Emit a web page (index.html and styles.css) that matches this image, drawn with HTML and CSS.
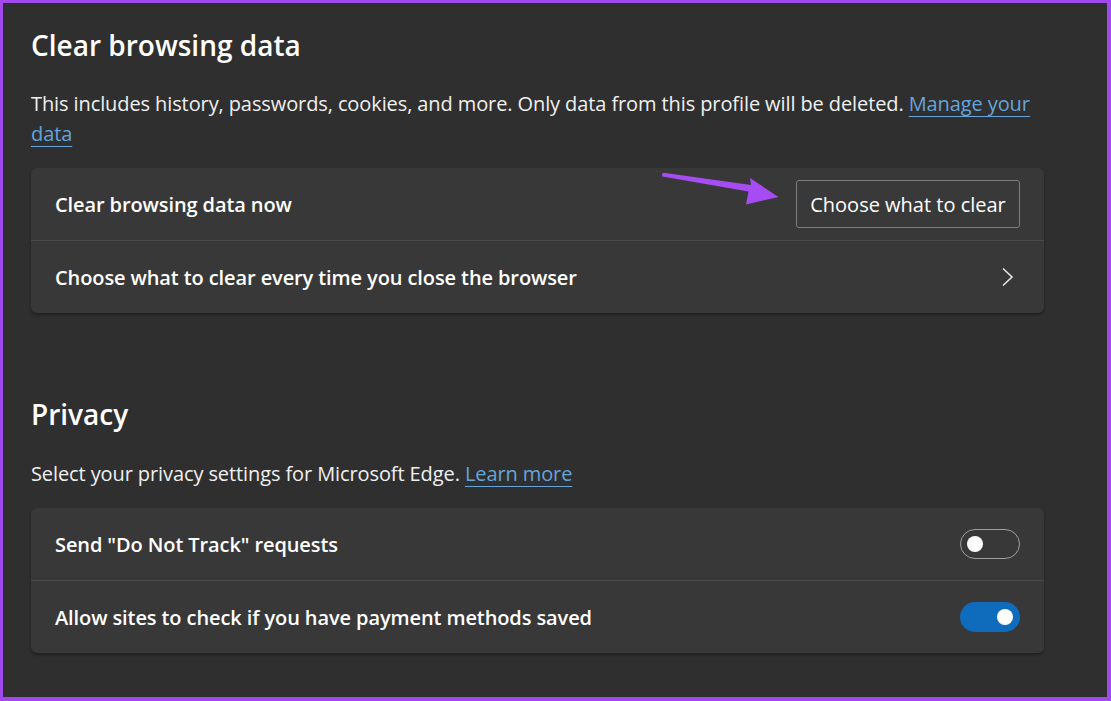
FILE: index.html
```html
<!DOCTYPE html>
<html lang="en">
<head>
<meta charset="utf-8">
<title>Clear browsing data</title>
<link rel="stylesheet" href="styles.css">
</head>
<body>
<div class="frame">
  <section class="section first">
    <h1 class="title">Clear browsing data</h1>
    <p class="desc">This includes history, passwords, cookies, and more. Only data from this profile will be deleted. <a class="link" href="#">Manage your data</a></p>
    <div class="card">
      <div class="row">
        <span class="label">Clear browsing data now</span>
        <button class="btn">Choose what to clear</button>
        <svg class="arrow" width="124" height="36" viewBox="0 0 124 36">
          <path d="M2.5 0.8 L90 13 L89 6 L117.5 25 L85 32.5 L87.5 19.5 L1.5 4.5 Q0 2.5 2.5 0.8 Z" fill="#a54df2"/>
        </svg>
      </div>
      <div class="row">
        <span class="label">Choose what to clear every time you close the browser</span>
        <svg class="chev" width="14" height="20" viewBox="0 0 14 20"><path d="M2 1.5 L11 10 L2 18.5" fill="none" stroke="#e6e6e6" stroke-width="1.6"/></svg>
      </div>
    </div>
  </section>
  <section class="section second">
    <h1 class="title">Privacy</h1>
    <p class="desc">Select your privacy settings for Microsoft Edge. <a class="link" href="#">Learn more</a></p>
    <div class="card">
      <div class="row">
        <span class="label">Send "Do Not Track" requests</span>
        <span class="toggle off"><span class="knob"></span></span>
      </div>
      <div class="row">
        <span class="label">Allow sites to check if you have payment methods saved</span>
        <span class="toggle on"><span class="knob"></span></span>
      </div>
    </div>
  </section>
</div>
</body>
</html>
```
FILE: styles.css
```css
* { box-sizing: border-box; }
html, body { margin: 0; padding: 0; }
body {
  background: #2f2f2f;
  font-family: "Open Sans", "Noto Sans", sans-serif;
  color: #ffffff;
}
.frame {
  width: 1111px;
  height: 701px;
  border-style: solid;
  border-color: #a249ee;
  border-width: 3px 4px 4px 3px;
  background: #2f2f2f;
  padding: 0 63px 0 28px;
  overflow: hidden;
}
.section.first { padding-top: 22px; }
.section.second { padding-top: 81px; }
.title {
  margin: 0;
  font-size: 28px;
  line-height: 40px;
  font-weight: 600;
  color: #ffffff;
}
.desc {
  margin: 0;
  font-size: 20px;
  line-height: 30px;
  color: #f0f0f0;
  letter-spacing: -0.1px;
}
.first .desc { margin-top: 24px; }
.second .desc { margin-top: 25px; }
.link {
  color: #66a4da;
  text-decoration: underline;
  text-decoration-color: #66a4da;
  text-underline-offset: 5px;
  text-decoration-thickness: 1px;
}
.card {
  margin-top: 19px;
  width: 1013px;
  background: #383838;
  border-radius: 6px;
  box-shadow: 0 2px 3px rgba(0, 0, 0, 0.35);
}
.second .card { margin-top: 19px; }
.row {
  position: relative;
  height: 72px;
  display: flex;
  align-items: center;
  justify-content: space-between;
  padding: 0 24px;
}
.row + .row { border-top: 1px solid #4a4a4a; height: 73px; }
.label {
  font-size: 20px;
  font-weight: 600;
  color: #ffffff;
  letter-spacing: -0.1px;
}
.btn {
  width: 224px;
  height: 48px;
  background: #393939;
  border: 1px solid #7d7d7d;
  border-radius: 3px;
  color: #ffffff;
  font-family: inherit;
  font-size: 20px;
  padding: 0;
}
.arrow {
  position: absolute;
  left: 630px;
  top: 4px;
}
.chev { margin-right: 5px; }
.toggle {
  position: relative;
  width: 60px;
  height: 30px;
  border-radius: 15px;
  display: block;
}
.toggle.off { border: 1.5px solid #a0a0a0; }
.toggle.on { background: #0f6cbd; }
.knob {
  position: absolute;
  top: 50%;
  width: 16px;
  height: 16px;
  margin-top: -8px;
  border-radius: 50%;
  background: #ffffff;
}
.toggle.off .knob { left: 6px; }
.toggle.on .knob { right: 7px; }
```
